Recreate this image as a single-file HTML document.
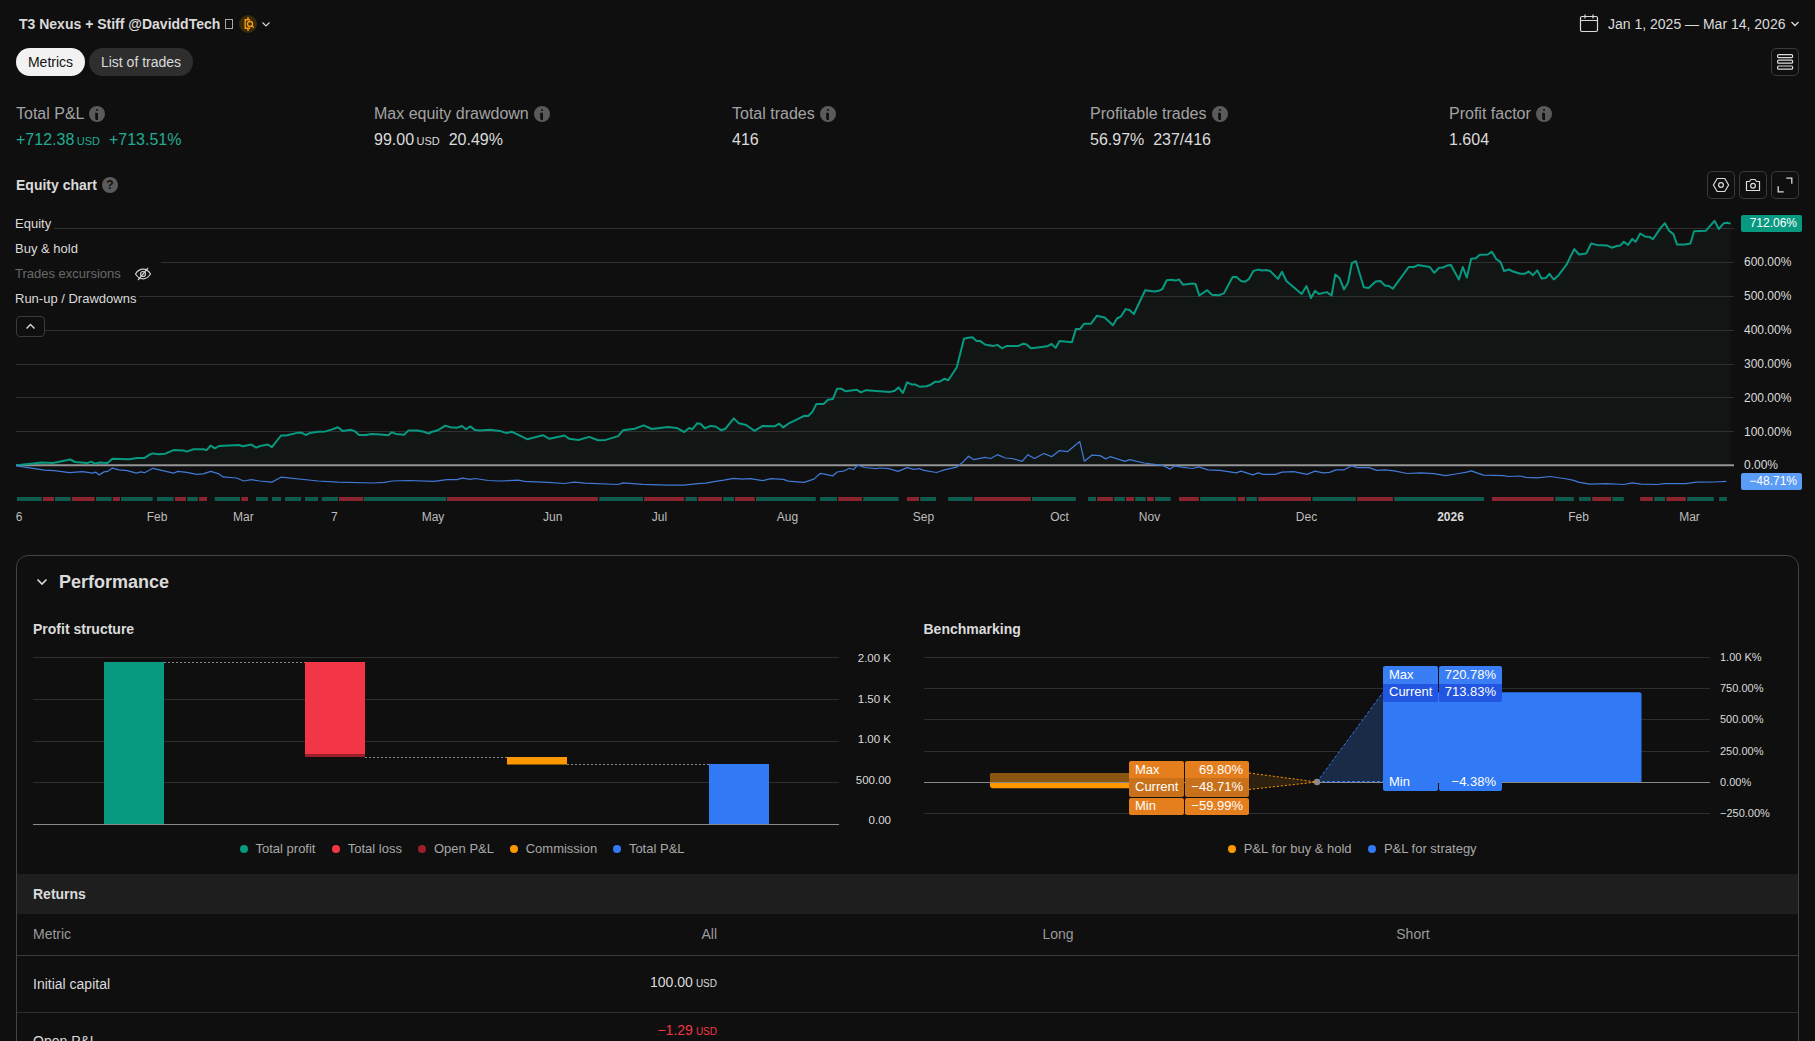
<!DOCTYPE html>
<html><head><meta charset="utf-8">
<style>
*{box-sizing:border-box;margin:0;padding:0}
html,body{width:1815px;height:1041px;overflow:hidden;background:#0f0f0f;font-family:"Liberation Sans",sans-serif;color:#dbdbdb}
.a{position:absolute;white-space:nowrap}
.title{left:19px;top:15px;font-size:14px;font-weight:bold;line-height:18px;color:#dbdbdb}
.pill{height:28px;top:48px;border-radius:14px;font-size:14px;line-height:28px;text-align:center}
.mlabel{top:104px;font-size:16px;line-height:20px;color:#a3a3a3}
.mval{top:130px;font-size:16px;line-height:20px;color:#dbdbdb}
.usd{font-size:11px;margin-left:2px}
.info{width:16px;height:16px;border-radius:50%;background:#5a5a5a;top:106px}
.info:after{content:"";position:absolute;left:7px;top:7px;width:2px;height:6px;background:#0f0f0f;border-top:1px solid #0f0f0f;box-shadow:-1px -0.5px 0 -0.2px #0f0f0f}
.info:before{content:"";position:absolute;left:7px;top:3px;width:2.2px;height:2.2px;background:#0f0f0f;border-radius:50%}
.btn{width:28px;height:28px;border:1px solid #3a3a3a;border-radius:5px}
.leg{font-size:13px;line-height:16px;color:#dbdbdb;background:#0f0f0f;padding:4px 0}
.yl{font-size:12px;line-height:14px;color:#dbdbdb;left:1744px}
.xl{font-size:12px;line-height:14px;color:#bdbdbd;top:510px;transform:translateX(-50%)}
.panel{left:16px;top:555px;width:1783px;height:520px;border:1px solid #434343;border-radius:12px}
.h2{font-size:14px;font-weight:bold;line-height:18px;color:#dbdbdb}
.psl{font-size:11.5px;line-height:14px;color:#dbdbdb;text-align:right;width:60px;left:831px}
.bl{font-size:11px;line-height:14px;color:#dbdbdb;left:1720px}
.lg{font-size:13px;line-height:16px;color:#a8a8a8}
.dot{display:inline-block;width:8px;height:8px;border-radius:50%;margin-right:8px;vertical-align:0px}
.tb{font-size:13px;line-height:17px;color:#fff}
.th{font-size:14px;line-height:18px;color:#9a9a9a}
.td{font-size:14px;line-height:18px;color:#dbdbdb}
</style></head><body>
<!-- HEADER -->
<div class="a title">T3 Nexus + Stiff @DaviddTech</div>
<div class="a" style="left:225px;top:19px;width:8.3px;height:10px;border:1.2px solid #a8a8a8"></div>
<div class="a" style="left:239px;top:15px;width:18px;height:18px;border-radius:50%;background:#3a2a0a"></div>
<svg class="a" style="left:239px;top:15px" width="18" height="18" viewBox="0 0 18 18"><g fill="none" stroke="#f39c12" stroke-width="1.4"><path d="M9 2v2.8M9 13.3v2.6"/><path d="M11.2 4.8H6.2V13.3H11.2"/><circle cx="11" cy="9" r="2.5"/><path d="M12.9 10.9l1.9 1.6"/></g></svg>
<svg class="a" style="left:261px;top:20px" width="10" height="8" viewBox="0 0 10 8"><path d="M1.5 2.5l3.5 3.5 3.5-3.5" fill="none" stroke="#dbdbdb" stroke-width="1.1"/></svg>

<svg class="a" style="left:1579px;top:13px" width="20" height="20" viewBox="0 0 20 20"><g fill="none" stroke="#dbdbdb" stroke-width="1.2"><rect x="1.5" y="3.5" width="17" height="15" rx="1.5"/><path d="M1.5 7.5h17M6 1.5v4M14 1.5v4"/></g></svg>
<div class="a" style="left:1608px;top:15px;font-size:14px;line-height:18px;color:#dbdbdb">Jan 1, 2025 — Mar 14, 2026</div>
<svg class="a" style="left:1789px;top:19px" width="12" height="10" viewBox="0 0 12 10"><path d="M2.5 3l3.5 3.5 3.5-3.5" fill="none" stroke="#dbdbdb" stroke-width="1.3"/></svg>

<div class="a pill" style="left:16px;width:69px;background:#f2f2f2;color:#131313">Metrics</div>
<div class="a pill" style="left:89px;width:104px;background:#2e2e2e;color:#dbdbdb">List of trades</div>
<div class="a btn" style="left:1771px;top:48px"></div>
<svg class="a" style="left:1771px;top:48px" width="28" height="28" viewBox="0 0 28 28"><g fill="none" stroke="#dbdbdb" stroke-width="1.2"><rect x="6.6" y="6.6" width="15" height="3" rx="1"/><rect x="6.6" y="12.2" width="15" height="3" rx="1"/><rect x="6.6" y="18" width="15" height="3.2" rx="1"/></g></svg>

<!-- METRICS -->
<div class="a mlabel" style="left:16px">Total P&amp;L</div><div class="a info" style="left:89px"></div>
<div class="a mval" style="left:16px;color:#22ab94">+712.38<span class="usd" style="margin-left:2.5px">USD</span>&nbsp;&nbsp;+713.51%</div>
<div class="a mlabel" style="left:374px">Max equity drawdown</div><div class="a info" style="left:534px"></div>
<div class="a mval" style="left:374px">99.00<span class="usd" style="margin-left:2.5px">USD</span>&nbsp;&nbsp;20.49%</div>
<div class="a mlabel" style="left:732px">Total trades</div><div class="a info" style="left:820px"></div>
<div class="a mval" style="left:732px">416</div>
<div class="a mlabel" style="left:1090px">Profitable trades</div><div class="a info" style="left:1212px"></div>
<div class="a mval" style="left:1090px">56.97%&nbsp;&nbsp;237/416</div>
<div class="a mlabel" style="left:1449px">Profit factor</div><div class="a info" style="left:1536px"></div>
<div class="a mval" style="left:1449px">1.604</div>

<!-- EQUITY CHART -->
<div class="a h2" style="left:16px;top:176px">Equity chart</div>
<div class="a" style="left:102px;top:177px;width:16px;height:16px;border-radius:50%;background:#5a5a5a;color:#0f0f0f;font-size:12px;font-weight:bold;line-height:17.5px;text-align:center">?</div>
<div class="a btn" style="left:1707px;top:171px"></div>
<div class="a btn" style="left:1739px;top:171px"></div>
<div class="a btn" style="left:1771px;top:171px"></div>
<svg class="a" style="left:1707px;top:171px" width="28" height="28" viewBox="0 0 28 28"><g fill="none" stroke="#dbdbdb" stroke-width="1.2"><path d="M10.2 7.5h7.6l3.8 6.5-3.8 6.5h-7.6l-3.8-6.5z"/><circle cx="14" cy="14" r="2.4"/></g></svg>
<svg class="a" style="left:1739px;top:171px" width="28" height="28" viewBox="0 0 28 28"><g fill="none" stroke="#dbdbdb" stroke-width="1.2"><path d="M7.5 10.5h3l1.5-2h4l1.5 2h3v9h-13z"/><circle cx="14" cy="14.8" r="2.4"/></g></svg>
<svg class="a" style="left:1771px;top:171px" width="28" height="28" viewBox="0 0 28 28"><g fill="none" stroke="#dbdbdb" stroke-width="1.3"><path d="M15.3 7.2H20.8V12.8M12.7 20.8H7.2V15.2"/></g></svg>
<svg class="a" style="left:0;top:0" width="1815" height="541" viewBox="0 0 1815 541">
<line x1="16" y1="228.5" x2="1734" y2="228.5" stroke="#2e2e2e" stroke-width="1"/>
<line x1="16" y1="262.5" x2="1734" y2="262.5" stroke="#2e2e2e" stroke-width="1"/>
<line x1="16" y1="296.5" x2="1734" y2="296.5" stroke="#2e2e2e" stroke-width="1"/>
<line x1="16" y1="330.5" x2="1734" y2="330.5" stroke="#2e2e2e" stroke-width="1"/>
<line x1="16" y1="364.5" x2="1734" y2="364.5" stroke="#2e2e2e" stroke-width="1"/>
<line x1="16" y1="397.5" x2="1734" y2="397.5" stroke="#2e2e2e" stroke-width="1"/>
<line x1="16" y1="431.5" x2="1734" y2="431.5" stroke="#2e2e2e" stroke-width="1"/>
<path d="M16.5 465.3 L33.0 463.6 L41.3 462.5 L52.9 463.1 L70.2 459.5 L75.2 462.0 L87.6 463.1 L90.9 461.7 L95.0 463.6 L99.2 462.5 L107.4 463.1 L112.4 458.7 L128.9 459.2 L137.2 457.9 L144.6 457.9 L150.4 454.2 L152.9 453.4 L158.7 454.2 L165.3 453.7 L173.6 450.1 L183.5 450.4 L186.8 451.6 L193.4 449.3 L203.3 449.3 L206.6 450.1 L210.7 445.5 L214.9 448.3 L219.0 446.0 L238.8 445.0 L243.0 446.3 L251.2 444.6 L256.2 447.6 L260.3 446.0 L267.8 444.6 L271.9 447.1 L281.0 435.5 L286.0 435.5 L298.3 432.6 L302.4 433.1 L305.7 435.0 L309.8 433.1 L318.1 431.7 L325.5 431.4 L332.1 429.4 L337.9 427.3 L342.6 430.9 L350.8 429.8 L354.5 431.1 L359.1 435.0 L366.0 435.0 L371.0 433.9 L380.9 434.4 L388.3 435.2 L391.7 432.2 L395.8 433.9 L404.0 434.7 L408.2 430.6 L417.3 430.6 L423.9 431.7 L428.8 433.6 L432.1 431.7 L437.1 430.6 L445.4 425.6 L450.3 427.3 L456.9 427.8 L461.9 426.0 L466.0 429.3 L470.2 426.4 L475.1 430.1 L480.1 430.6 L490.0 429.8 L499.9 430.9 L506.5 433.1 L511.5 431.7 L516.4 433.9 L527.2 439.2 L542.9 435.2 L549.5 438.8 L564.4 435.5 L569.3 438.8 L578.4 440.0 L589.1 436.9 L598.2 440.2 L605.7 439.9 L618.1 436.1 L623.0 430.3 L634.6 428.7 L643.7 425.4 L651.9 429.0 L667.6 427.0 L676.7 427.9 L684.2 432.0 L689.1 427.9 L692.4 429.2 L697.4 423.2 L700.7 424.0 L704.8 428.2 L710.6 425.9 L715.6 426.5 L721.4 430.3 L725.5 428.7 L733.8 418.4 L738.7 423.2 L746.2 425.0 L754.4 430.8 L762.7 425.9 L775.1 426.2 L779.2 423.7 L783.3 427.4 L788.3 423.7 L798.2 418.8 L804.0 415.8 L808.1 416.0 L812.3 412.1 L816.4 403.9 L823.8 403.9 L828.0 399.8 L832.9 398.9 L837.1 388.7 L841.2 388.7 L845.3 391.2 L856.9 389.8 L861.0 392.3 L866.0 390.2 L880.0 391.2 L890.2 391.9 L894.7 390.8 L898.5 387.4 L903.0 393.0 L907.1 382.4 L911.6 384.4 L915.0 384.4 L919.5 386.7 L926.3 386.3 L930.8 384.7 L935.3 381.7 L939.8 381.7 L944.3 378.8 L948.2 380.2 L956.7 367.5 L964.0 338.8 L968.0 337.7 L972.6 337.3 L976.6 341.1 L980.5 341.1 L985.0 344.5 L992.9 346.1 L997.4 344.9 L1001.9 348.3 L1006.4 346.1 L1017.7 346.1 L1023.3 343.8 L1026.7 344.5 L1030.8 348.3 L1038.0 347.4 L1047.0 346.3 L1051.6 344.0 L1055.6 347.9 L1059.5 341.1 L1071.9 342.2 L1075.9 329.1 L1079.8 329.1 L1084.3 323.7 L1091.1 323.7 L1096.7 315.8 L1104.6 317.4 L1113.0 325.3 L1117.0 318.5 L1121.1 316.3 L1125.6 309.1 L1129.4 310.0 L1133.9 314.0 L1145.2 290.3 L1154.3 291.4 L1158.8 290.8 L1162.2 289.2 L1166.7 280.2 L1171.2 279.7 L1175.7 280.6 L1179.0 279.4 L1182.9 284.7 L1192.2 283.6 L1195.6 284.1 L1199.3 295.5 L1207.2 290.2 L1212.0 294.7 L1218.6 295.2 L1223.9 293.4 L1232.6 277.0 L1236.5 277.0 L1241.0 281.0 L1245.0 281.8 L1248.9 279.1 L1253.4 270.9 L1258.2 269.6 L1262.1 270.4 L1266.1 270.1 L1270.1 270.9 L1278.0 278.9 L1281.9 271.7 L1286.4 281.0 L1301.7 293.9 L1306.5 286.0 L1311.0 298.1 L1315.0 290.7 L1318.9 293.9 L1326.8 292.1 L1331.6 295.5 L1335.3 274.4 L1339.5 278.1 L1344.0 289.4 L1348.0 282.8 L1351.9 263.0 L1355.9 261.2 L1363.8 287.3 L1368.6 288.1 L1375.7 281.5 L1380.4 281.0 L1384.9 285.5 L1388.9 286.0 L1392.9 288.6 L1408.7 267.0 L1414.0 267.0 L1417.9 265.1 L1429.8 267.0 L1434.3 272.8 L1439.1 267.8 L1443.0 267.5 L1447.0 265.6 L1450.9 264.9 L1458.9 279.4 L1462.8 267.0 L1466.8 277.5 L1471.2 258.8 L1475.8 258.2 L1479.7 254.8 L1487.7 254.5 L1491.9 251.7 L1496.2 259.0 L1500.4 261.9 L1504.1 271.0 L1508.9 269.5 L1513.2 271.5 L1520.3 273.8 L1524.5 273.8 L1528.8 271.5 L1533.0 275.2 L1537.3 270.4 L1541.6 278.6 L1545.8 278.0 L1549.5 273.8 L1553.7 279.5 L1558.6 275.2 L1566.5 264.7 L1574.2 249.1 L1579.0 254.5 L1586.3 253.4 L1591.2 243.5 L1596.8 244.9 L1606.8 245.4 L1611.9 247.7 L1616.7 246.0 L1620.4 245.4 L1623.8 241.8 L1628.0 244.9 L1632.3 238.9 L1635.7 241.8 L1640.2 233.5 L1645.0 236.4 L1649.3 236.9 L1653.0 239.2 L1660.6 227.9 L1664.9 223.3 L1669.1 230.7 L1673.4 234.1 L1677.1 244.6 L1684.7 244.6 L1690.4 243.5 L1694.1 231.3 L1706.0 230.7 L1714.5 220.8 L1718.8 229.0 L1723.6 223.3 L1727.3 222.8 L1730.7 223.6 L1730.7 465.3 L16.5 465.3 Z" fill="#111615"/>
<line x1="16" y1="228.5" x2="1734" y2="228.5" stroke="#2f3131" stroke-width="1"/>
<line x1="16" y1="262.5" x2="1734" y2="262.5" stroke="#2f3131" stroke-width="1"/>
<line x1="16" y1="296.5" x2="1734" y2="296.5" stroke="#2f3131" stroke-width="1"/>
<line x1="16" y1="330.5" x2="1734" y2="330.5" stroke="#2f3131" stroke-width="1"/>
<line x1="16" y1="364.5" x2="1734" y2="364.5" stroke="#2f3131" stroke-width="1"/>
<line x1="16" y1="397.5" x2="1734" y2="397.5" stroke="#2f3131" stroke-width="1"/>
<line x1="16" y1="431.5" x2="1734" y2="431.5" stroke="#2f3131" stroke-width="1"/>
<line x1="16" y1="465.3" x2="1734" y2="465.3" stroke="#959595" stroke-width="2"/>
<path d="M16.5 465.3 L33.0 463.6 L41.3 462.5 L52.9 463.1 L70.2 459.5 L75.2 462.0 L87.6 463.1 L90.9 461.7 L95.0 463.6 L99.2 462.5 L107.4 463.1 L112.4 458.7 L128.9 459.2 L137.2 457.9 L144.6 457.9 L150.4 454.2 L152.9 453.4 L158.7 454.2 L165.3 453.7 L173.6 450.1 L183.5 450.4 L186.8 451.6 L193.4 449.3 L203.3 449.3 L206.6 450.1 L210.7 445.5 L214.9 448.3 L219.0 446.0 L238.8 445.0 L243.0 446.3 L251.2 444.6 L256.2 447.6 L260.3 446.0 L267.8 444.6 L271.9 447.1 L281.0 435.5 L286.0 435.5 L298.3 432.6 L302.4 433.1 L305.7 435.0 L309.8 433.1 L318.1 431.7 L325.5 431.4 L332.1 429.4 L337.9 427.3 L342.6 430.9 L350.8 429.8 L354.5 431.1 L359.1 435.0 L366.0 435.0 L371.0 433.9 L380.9 434.4 L388.3 435.2 L391.7 432.2 L395.8 433.9 L404.0 434.7 L408.2 430.6 L417.3 430.6 L423.9 431.7 L428.8 433.6 L432.1 431.7 L437.1 430.6 L445.4 425.6 L450.3 427.3 L456.9 427.8 L461.9 426.0 L466.0 429.3 L470.2 426.4 L475.1 430.1 L480.1 430.6 L490.0 429.8 L499.9 430.9 L506.5 433.1 L511.5 431.7 L516.4 433.9 L527.2 439.2 L542.9 435.2 L549.5 438.8 L564.4 435.5 L569.3 438.8 L578.4 440.0 L589.1 436.9 L598.2 440.2 L605.7 439.9 L618.1 436.1 L623.0 430.3 L634.6 428.7 L643.7 425.4 L651.9 429.0 L667.6 427.0 L676.7 427.9 L684.2 432.0 L689.1 427.9 L692.4 429.2 L697.4 423.2 L700.7 424.0 L704.8 428.2 L710.6 425.9 L715.6 426.5 L721.4 430.3 L725.5 428.7 L733.8 418.4 L738.7 423.2 L746.2 425.0 L754.4 430.8 L762.7 425.9 L775.1 426.2 L779.2 423.7 L783.3 427.4 L788.3 423.7 L798.2 418.8 L804.0 415.8 L808.1 416.0 L812.3 412.1 L816.4 403.9 L823.8 403.9 L828.0 399.8 L832.9 398.9 L837.1 388.7 L841.2 388.7 L845.3 391.2 L856.9 389.8 L861.0 392.3 L866.0 390.2 L880.0 391.2 L890.2 391.9 L894.7 390.8 L898.5 387.4 L903.0 393.0 L907.1 382.4 L911.6 384.4 L915.0 384.4 L919.5 386.7 L926.3 386.3 L930.8 384.7 L935.3 381.7 L939.8 381.7 L944.3 378.8 L948.2 380.2 L956.7 367.5 L964.0 338.8 L968.0 337.7 L972.6 337.3 L976.6 341.1 L980.5 341.1 L985.0 344.5 L992.9 346.1 L997.4 344.9 L1001.9 348.3 L1006.4 346.1 L1017.7 346.1 L1023.3 343.8 L1026.7 344.5 L1030.8 348.3 L1038.0 347.4 L1047.0 346.3 L1051.6 344.0 L1055.6 347.9 L1059.5 341.1 L1071.9 342.2 L1075.9 329.1 L1079.8 329.1 L1084.3 323.7 L1091.1 323.7 L1096.7 315.8 L1104.6 317.4 L1113.0 325.3 L1117.0 318.5 L1121.1 316.3 L1125.6 309.1 L1129.4 310.0 L1133.9 314.0 L1145.2 290.3 L1154.3 291.4 L1158.8 290.8 L1162.2 289.2 L1166.7 280.2 L1171.2 279.7 L1175.7 280.6 L1179.0 279.4 L1182.9 284.7 L1192.2 283.6 L1195.6 284.1 L1199.3 295.5 L1207.2 290.2 L1212.0 294.7 L1218.6 295.2 L1223.9 293.4 L1232.6 277.0 L1236.5 277.0 L1241.0 281.0 L1245.0 281.8 L1248.9 279.1 L1253.4 270.9 L1258.2 269.6 L1262.1 270.4 L1266.1 270.1 L1270.1 270.9 L1278.0 278.9 L1281.9 271.7 L1286.4 281.0 L1301.7 293.9 L1306.5 286.0 L1311.0 298.1 L1315.0 290.7 L1318.9 293.9 L1326.8 292.1 L1331.6 295.5 L1335.3 274.4 L1339.5 278.1 L1344.0 289.4 L1348.0 282.8 L1351.9 263.0 L1355.9 261.2 L1363.8 287.3 L1368.6 288.1 L1375.7 281.5 L1380.4 281.0 L1384.9 285.5 L1388.9 286.0 L1392.9 288.6 L1408.7 267.0 L1414.0 267.0 L1417.9 265.1 L1429.8 267.0 L1434.3 272.8 L1439.1 267.8 L1443.0 267.5 L1447.0 265.6 L1450.9 264.9 L1458.9 279.4 L1462.8 267.0 L1466.8 277.5 L1471.2 258.8 L1475.8 258.2 L1479.7 254.8 L1487.7 254.5 L1491.9 251.7 L1496.2 259.0 L1500.4 261.9 L1504.1 271.0 L1508.9 269.5 L1513.2 271.5 L1520.3 273.8 L1524.5 273.8 L1528.8 271.5 L1533.0 275.2 L1537.3 270.4 L1541.6 278.6 L1545.8 278.0 L1549.5 273.8 L1553.7 279.5 L1558.6 275.2 L1566.5 264.7 L1574.2 249.1 L1579.0 254.5 L1586.3 253.4 L1591.2 243.5 L1596.8 244.9 L1606.8 245.4 L1611.9 247.7 L1616.7 246.0 L1620.4 245.4 L1623.8 241.8 L1628.0 244.9 L1632.3 238.9 L1635.7 241.8 L1640.2 233.5 L1645.0 236.4 L1649.3 236.9 L1653.0 239.2 L1660.6 227.9 L1664.9 223.3 L1669.1 230.7 L1673.4 234.1 L1677.1 244.6 L1684.7 244.6 L1690.4 243.5 L1694.1 231.3 L1706.0 230.7 L1714.5 220.8 L1718.8 229.0 L1723.6 223.3 L1727.3 222.8 L1730.7 223.6" fill="none" stroke="#089981" stroke-width="2" stroke-linejoin="round"/>
<path d="M16.5 465.8 L44.6 470.2 L54.5 470.7 L69.4 472.7 L82.6 471.6 L92.6 473.2 L95.9 472.2 L99.2 474.9 L104.1 471.9 L107.4 471.4 L112.4 468.1 L119.0 469.8 L127.3 470.7 L136.4 473.2 L140.5 471.9 L144.6 472.7 L152.9 468.3 L173.6 473.2 L177.7 471.4 L186.8 472.4 L196.7 474.4 L203.3 473.9 L210.7 471.4 L218.2 473.6 L223.1 476.9 L236.4 478.0 L243.8 481.0 L251.2 479.7 L259.5 481.0 L271.9 482.1 L281.0 477.2 L318.1 481.0 L337.9 482.1 L372.6 483.0 L384.2 482.3 L392.5 481.0 L409.0 480.5 L433.8 481.3 L447.0 479.7 L456.9 479.7 L462.7 478.2 L470.2 479.3 L475.1 478.5 L488.3 480.5 L499.9 481.0 L518.1 480.2 L524.7 481.3 L547.9 482.3 L564.4 483.5 L574.3 482.1 L585.0 483.2 L618.1 484.5 L623.0 482.9 L642.9 484.4 L667.6 485.2 L684.2 485.2 L697.4 483.6 L705.7 483.2 L713.9 481.6 L723.8 480.2 L733.8 478.3 L742.0 479.1 L750.3 478.6 L762.7 480.7 L771.0 478.6 L783.3 479.4 L788.3 481.1 L804.0 482.4 L813.9 479.1 L820.5 473.3 L833.0 475.8 L837.1 472.0 L844.5 470.8 L849.5 468.3 L853.6 469.5 L857.7 465.0 L864.3 467.5 L875.9 468.7 L880.0 468.0 L889.0 468.6 L898.0 471.4 L907.1 467.7 L913.9 469.3 L919.5 468.6 L924.0 470.4 L936.4 472.5 L944.3 469.8 L956.7 467.1 L962.4 462.6 L968.5 456.2 L973.7 459.6 L985.0 457.4 L990.6 458.5 L997.4 454.7 L1005.3 458.0 L1012.1 458.5 L1022.2 461.4 L1027.9 454.7 L1034.6 458.5 L1043.7 453.5 L1051.6 456.7 L1059.5 450.6 L1067.4 451.7 L1079.8 441.6 L1084.3 461.2 L1092.2 455.1 L1100.1 455.6 L1105.7 458.9 L1110.2 456.7 L1124.9 461.4 L1129.4 459.6 L1144.1 463.0 L1162.2 465.3 L1170.1 469.1 L1175.0 465.8 L1181.6 467.1 L1192.2 468.5 L1198.8 466.9 L1208.0 469.8 L1219.9 470.3 L1236.3 472.9 L1241.0 471.1 L1252.9 474.8 L1258.2 472.9 L1263.5 474.3 L1275.3 474.3 L1281.9 472.1 L1293.8 471.6 L1307.0 474.3 L1315.0 471.1 L1322.9 472.9 L1329.5 472.4 L1336.1 469.8 L1344.0 469.8 L1351.9 465.8 L1357.2 467.7 L1369.1 467.7 L1377.0 470.3 L1384.9 469.8 L1394.2 470.8 L1407.4 473.5 L1420.6 472.9 L1433.8 473.7 L1445.7 475.6 L1458.9 473.5 L1466.8 472.1 L1471.2 470.8 L1483.4 475.1 L1503.3 475.7 L1508.9 476.5 L1520.3 476.0 L1526.0 477.4 L1537.3 477.9 L1550.1 476.5 L1564.2 478.5 L1572.7 480.2 L1578.4 482.2 L1589.8 484.2 L1606.8 483.6 L1623.8 484.5 L1632.3 482.8 L1640.8 484.2 L1657.8 484.5 L1663.5 483.6 L1686.2 483.6 L1696.1 482.2 L1714.5 482.0 L1726.4 481.3" fill="none" stroke="#4179d6" stroke-width="1.25" stroke-linejoin="round"/>
<rect x="16.9" y="497" width="24.8" height="4" fill="#0d5c4d"/>
<rect x="42.9" y="497" width="11.1" height="4" fill="#8a2530"/>
<rect x="55.0" y="497" width="15.7" height="4" fill="#0d5c4d"/>
<rect x="71.9" y="497" width="22.8" height="4" fill="#8a2530"/>
<rect x="96.0" y="497" width="15.6" height="4" fill="#0d5c4d"/>
<rect x="112.8" y="497" width="7.2" height="4" fill="#8a2530"/>
<rect x="121.0" y="497" width="31.7" height="4" fill="#0d5c4d"/>
<rect x="157.0" y="497" width="16.6" height="4" fill="#0d5c4d"/>
<rect x="175.0" y="497" width="11.0" height="4" fill="#8a2530"/>
<rect x="187.2" y="497" width="10.7" height="4" fill="#0d5c4d"/>
<rect x="199.1" y="497" width="7.9" height="4" fill="#8a2530"/>
<rect x="214.7" y="497" width="25.3" height="4" fill="#0d5c4d"/>
<rect x="241.3" y="497" width="6.7" height="4" fill="#8a2530"/>
<rect x="255.9" y="497" width="11.9" height="4" fill="#0d5c4d"/>
<rect x="272.0" y="497" width="9.0" height="4" fill="#0d5c4d"/>
<rect x="285.1" y="497" width="15.9" height="4" fill="#0d5c4d"/>
<rect x="305.0" y="497" width="13.1" height="4" fill="#0d5c4d"/>
<rect x="321.8" y="497" width="16.2" height="4" fill="#0d5c4d"/>
<rect x="339.0" y="497" width="24.3" height="4" fill="#8a2530"/>
<rect x="364.0" y="497" width="82.2" height="4" fill="#0d5c4d"/>
<rect x="447.0" y="497" width="150.9" height="4" fill="#8a2530"/>
<rect x="599.2" y="497" width="43.8" height="4" fill="#0d5c4d"/>
<rect x="644.1" y="497" width="40.1" height="4" fill="#8a2530"/>
<rect x="685.4" y="497" width="11.6" height="4" fill="#0d5c4d"/>
<rect x="698.1" y="497" width="23.9" height="4" fill="#8a2530"/>
<rect x="723.2" y="497" width="10.8" height="4" fill="#0d5c4d"/>
<rect x="735.0" y="497" width="19.8" height="4" fill="#8a2530"/>
<rect x="756.0" y="497" width="59.8" height="4" fill="#0d5c4d"/>
<rect x="820.0" y="497" width="17.1" height="4" fill="#0d5c4d"/>
<rect x="838.1" y="497" width="23.9" height="4" fill="#8a2530"/>
<rect x="863.2" y="497" width="35.4" height="4" fill="#0d5c4d"/>
<rect x="906.9" y="497" width="12.1" height="4" fill="#8a2530"/>
<rect x="920.2" y="497" width="15.8" height="4" fill="#0d5c4d"/>
<rect x="948.1" y="497" width="24.5" height="4" fill="#0d5c4d"/>
<rect x="974.1" y="497" width="56.8" height="4" fill="#8a2530"/>
<rect x="1032.0" y="497" width="43.8" height="4" fill="#0d5c4d"/>
<rect x="1088.1" y="497" width="7.9" height="4" fill="#0d5c4d"/>
<rect x="1097.2" y="497" width="15.8" height="4" fill="#8a2530"/>
<rect x="1114.1" y="497" width="10.8" height="4" fill="#0d5c4d"/>
<rect x="1126.0" y="497" width="8.0" height="4" fill="#8a2530"/>
<rect x="1135.1" y="497" width="10.6" height="4" fill="#0d5c4d"/>
<rect x="1147.0" y="497" width="6.8" height="4" fill="#8a2530"/>
<rect x="1155.0" y="497" width="15.7" height="4" fill="#0d5c4d"/>
<rect x="1179.0" y="497" width="19.8" height="4" fill="#8a2530"/>
<rect x="1200.1" y="497" width="36.4" height="4" fill="#0d5c4d"/>
<rect x="1237.8" y="497" width="7.2" height="4" fill="#8a2530"/>
<rect x="1246.3" y="497" width="10.6" height="4" fill="#0d5c4d"/>
<rect x="1258.2" y="497" width="52.8" height="4" fill="#8a2530"/>
<rect x="1312.3" y="497" width="43.6" height="4" fill="#0d5c4d"/>
<rect x="1357.2" y="497" width="35.7" height="4" fill="#8a2530"/>
<rect x="1394.2" y="497" width="89.8" height="4" fill="#0d5c4d"/>
<rect x="1491.9" y="497" width="61.9" height="4" fill="#8a2530"/>
<rect x="1555.2" y="497" width="18.6" height="4" fill="#0d5c4d"/>
<rect x="1579.0" y="497" width="11.8" height="4" fill="#0d5c4d"/>
<rect x="1592.2" y="497" width="18.9" height="4" fill="#8a2530"/>
<rect x="1612.3" y="497" width="11.5" height="4" fill="#0d5c4d"/>
<rect x="1640.1" y="497" width="12.7" height="4" fill="#8a2530"/>
<rect x="1654.2" y="497" width="10.8" height="4" fill="#0d5c4d"/>
<rect x="1666.3" y="497" width="19.5" height="4" fill="#8a2530"/>
<rect x="1687.2" y="497" width="26.7" height="4" fill="#0d5c4d"/>
<rect x="1719.1" y="497" width="7.8" height="4" fill="#0d5c4d"/>
</svg>
<div class="a leg" style="left:14px;top:212px;padding:4px 3px 4px 1px">Equity</div>
<div class="a leg" style="left:14px;top:237px;padding:4px 3px 4px 1px">Buy &amp; hold</div>
<div class="a leg" style="left:14px;top:262px;padding:4px 40px 4px 1px;color:#6a6a6a">Trades excursions</div>
<svg class="a" style="left:134px;top:265px" width="18" height="18" viewBox="0 0 18 18"><g fill="none" stroke="#cfcfcf" stroke-width="1.2"><path d="M1.5 9c2-3.2 4.5-4.8 7.5-4.8s5.5 1.6 7.5 4.8c-2 3.2-4.5 4.8-7.5 4.8S3.5 12.2 1.5 9z"/><circle cx="9" cy="9" r="2.5"/><path d="M14 3L4 15"/></g></svg>
<div class="a leg" style="left:14px;top:287px;padding:4px 3px 4px 1px">Run-up / Drawdowns</div>
<div class="a" style="left:16px;top:316px;width:29px;height:21px;border:1px solid #3a3a3a;border-radius:4px;background:#0f0f0f"></div>
<svg class="a" style="left:16px;top:316px" width="29" height="21" viewBox="0 0 29 21"><path d="M10.5 12.5l4-4 4 4" fill="none" stroke="#dbdbdb" stroke-width="1.4"/></svg>
<div class="a yl" style="top:221.3px">700.00%</div>
<div class="a yl" style="top:255.2px">600.00%</div>
<div class="a yl" style="top:289.1px">500.00%</div>
<div class="a yl" style="top:323.0px">400.00%</div>
<div class="a yl" style="top:356.9px">300.00%</div>
<div class="a yl" style="top:390.7px">200.00%</div>
<div class="a yl" style="top:424.5px">100.00%</div>
<div class="a yl" style="top:458.3px">0.00%</div>
<div class="a" style="left:1741px;top:215px;width:61px;height:17px;background:#089981;border-radius:2px;color:#fff;font-size:12px;line-height:17px;text-align:right;padding-right:5px">712.06%</div>
<div class="a" style="left:1741px;top:473px;width:61px;height:17px;background:#5b9cf6;border-radius:2px;color:#fff;font-size:12px;line-height:17px;text-align:right;padding-right:5px">−48.71%</div>
<div class="a xl" style="left:19px;">6</div>
<div class="a xl" style="left:157px;">Feb</div>
<div class="a xl" style="left:243.4px;">Mar</div>
<div class="a xl" style="left:334.4px;">7</div>
<div class="a xl" style="left:433px;">May</div>
<div class="a xl" style="left:552.7px;">Jun</div>
<div class="a xl" style="left:659.5px;">Jul</div>
<div class="a xl" style="left:787.4px;">Aug</div>
<div class="a xl" style="left:923.5px;">Sep</div>
<div class="a xl" style="left:1059.5px;">Oct</div>
<div class="a xl" style="left:1149.5px;">Nov</div>
<div class="a xl" style="left:1306.5px;">Dec</div>
<div class="a xl" style="left:1450.5px;font-weight:bold;color:#dbdbdb;">2026</div>
<div class="a xl" style="left:1578.5px;">Feb</div>
<div class="a xl" style="left:1689.5px;">Mar</div>

<!-- PERFORMANCE -->
<div class="a panel"></div>
<svg class="a" style="left:35px;top:577px" width="14" height="10" viewBox="0 0 14 10"><path d="M2.5 2.5l4.5 4.5 4.5-4.5" fill="none" stroke="#dbdbdb" stroke-width="1.6"/></svg>
<div class="a" style="left:59px;top:571px;font-size:18px;font-weight:bold;line-height:22px;color:#dbdbdb">Performance</div>
<div class="a h2" style="left:33px;top:620px">Profit structure</div>
<div class="a h2" style="left:923.5px;top:620px">Benchmarking</div>
<svg class="a" style="left:0;top:0" width="1815" height="1041" viewBox="0 0 1815 1041">
<line x1="33" y1="657.5" x2="839" y2="657.5" stroke="#2e2e2e"/>
<line x1="33" y1="699.5" x2="839" y2="699.5" stroke="#2e2e2e"/>
<line x1="33" y1="741.5" x2="839" y2="741.5" stroke="#2e2e2e"/>
<line x1="33" y1="782.5" x2="839" y2="782.5" stroke="#2e2e2e"/>
<line x1="33" y1="824.5" x2="839" y2="824.5" stroke="#8a8a8a"/>
<rect x="104" y="662" width="60" height="162" fill="#089981"/>
<rect x="305" y="662" width="60" height="95" fill="#f23645"/>
<rect x="305" y="754" width="60" height="3" fill="#9c1f2a"/>
<rect x="507" y="757" width="60" height="7.5" fill="#ff9800"/>
<rect x="709" y="764" width="60" height="60" fill="#3179f5"/>
<path d="M164 662.5H305M365 757.5H507M567 764.5H709" stroke="#8a8a8a" stroke-dasharray="2 2"/>
<line x1="924" y1="657.5" x2="1710" y2="657.5" stroke="#2e2e2e"/>
<line x1="924" y1="688.5" x2="1710" y2="688.5" stroke="#2e2e2e"/>
<line x1="924" y1="719.5" x2="1710" y2="719.5" stroke="#2e2e2e"/>
<line x1="924" y1="751.5" x2="1710" y2="751.5" stroke="#2e2e2e"/>
<line x1="924" y1="813.5" x2="1710" y2="813.5" stroke="#2e2e2e"/>
<rect x="990" y="773" width="145" height="15.3" rx="3" fill="#ff9800"/>
<rect x="990" y="773" width="145" height="9.5" rx="3" fill="#8a5510"/>
<rect x="990" y="777" width="145" height="5.5" fill="#8a5510"/>
<line x1="924" y1="782.5" x2="1710" y2="782.5" stroke="#8a8a8a"/>
<path d="M1249 773L1317 782L1249 789.5Z" fill="#2e2110"/>
<path d="M1249 773L1317 782M1249 789.5L1317 782" stroke="#ff9800" stroke-width="1" stroke-dasharray="2 2"/>
<path d="M1317 782L1383 692.3L1383 782Z" fill="#1a2b48"/>
<path d="M1317 782L1383 692.3M1317 781.5H1383" stroke="#3179f5" stroke-width="1" stroke-dasharray="3 2"/>
<path d="M1383 782V692.3H1639.5a2 2 0 0 1 2 2V782Z" fill="#3179f5"/>
<circle cx="1317" cy="782" r="3.2" fill="#8a8a8a"/>
</svg>
<div class="a psl" style="top:651.4px">2.00 K</div>
<div class="a psl" style="top:692.2px">1.50 K</div>
<div class="a psl" style="top:731.9px">1.00 K</div>
<div class="a psl" style="top:773.0px">500.00</div>
<div class="a psl" style="top:813.0px">0.00</div>
<div class="a bl" style="top:649.8px">1.00 K%</div>
<div class="a bl" style="top:681.3px">750.00%</div>
<div class="a bl" style="top:712.3px">500.00%</div>
<div class="a bl" style="top:744.0px">250.00%</div>
<div class="a bl" style="top:774.8px">0.00%</div>
<div class="a bl" style="top:806.0px">−250.00%</div>
<div class="a" style="left:1129px;top:761px;width:55px;height:17px;background:#e57e1d;border-radius:2px 2px 0 0"></div>
<div class="a" style="left:1185.2px;top:761px;width:63.8px;height:17px;background:#e57e1d;border-radius:2px 2px 0 0"></div>
<div class="a tb" style="left:1135px;top:760.5px">Max</div>
<div class="a tb" style="left:1185px;width:58px;text-align:right;top:760.5px">69.80%</div>
<div class="a" style="left:1129px;top:778px;width:55px;height:19px;background:#c8711a;border-radius:0 0 2px 2px"></div>
<div class="a" style="left:1185.2px;top:778px;width:63.8px;height:19px;background:#c8711a;border-radius:0 0 2px 2px"></div>
<div class="a tb" style="left:1135px;top:777.5px">Current</div>
<div class="a tb" style="left:1185px;width:58px;text-align:right;top:777.5px">−48.71%</div>
<div class="a" style="left:1129px;top:797.8px;width:55px;height:16.800000000000068px;background:#e57e1d;border-radius:2px"></div>
<div class="a" style="left:1185.2px;top:797.8px;width:63.8px;height:16.800000000000068px;background:#e57e1d;border-radius:2px"></div>
<div class="a tb" style="left:1135px;top:797.2px">Min</div>
<div class="a tb" style="left:1185px;width:58px;text-align:right;top:797.2px">−59.99%</div>
<div class="a" style="left:1383px;top:666.3px;width:55px;height:17.90000000000009px;background:#3a7ef5;border-radius:2px 2px 0 0"></div>
<div class="a" style="left:1439.2px;top:666.3px;width:62.8px;height:17.90000000000009px;background:#3a7ef5;border-radius:2px 2px 0 0"></div>
<div class="a tb" style="left:1389px;top:666.2px">Max</div>
<div class="a tb" style="left:1439px;width:57px;text-align:right;top:666.2px">720.78%</div>
<div class="a" style="left:1383px;top:684.2px;width:55px;height:17.399999999999977px;background:#2255e0;border-radius:0 0 2px 2px"></div>
<div class="a" style="left:1439.2px;top:684.2px;width:62.8px;height:17.399999999999977px;background:#2255e0;border-radius:0 0 2px 2px"></div>
<div class="a tb" style="left:1389px;top:682.9px">Current</div>
<div class="a tb" style="left:1439px;width:57px;text-align:right;top:682.9px">713.83%</div>
<div class="a" style="left:1383px;top:773.4px;width:55px;height:17.5px;background:#3179f5;border-radius:2px"></div>
<div class="a" style="left:1439.2px;top:773.4px;width:62.8px;height:17.5px;background:#3179f5;border-radius:2px"></div>
<div class="a tb" style="left:1389px;top:773.1px">Min</div>
<div class="a tb" style="left:1439px;width:57px;text-align:right;top:773.1px">−4.38%</div>
<div class="a" style="left:239.5px;top:844.5px;width:8px;height:8px;border-radius:50%;background:#089981"></div>
<div class="a lg" style="left:255.5px;top:840.5px">Total profit</div>
<div class="a" style="left:331.7px;top:844.5px;width:8px;height:8px;border-radius:50%;background:#f23645"></div>
<div class="a lg" style="left:347.7px;top:840.5px">Total loss</div>
<div class="a" style="left:418px;top:844.5px;width:8px;height:8px;border-radius:50%;background:#9c1f2a"></div>
<div class="a lg" style="left:434px;top:840.5px">Open P&amp;L</div>
<div class="a" style="left:509.70000000000005px;top:844.5px;width:8px;height:8px;border-radius:50%;background:#ff9800"></div>
<div class="a lg" style="left:525.7px;top:840.5px">Commission</div>
<div class="a" style="left:612.9px;top:844.5px;width:8px;height:8px;border-radius:50%;background:#3179f5"></div>
<div class="a lg" style="left:628.9px;top:840.5px">Total P&amp;L</div>
<div class="a" style="left:1227.7px;top:844.5px;width:8px;height:8px;border-radius:50%;background:#ff9800"></div>
<div class="a lg" style="left:1243.7px;top:840.5px">P&amp;L for buy &amp; hold</div>
<div class="a" style="left:1367.9px;top:844.5px;width:8px;height:8px;border-radius:50%;background:#3179f5"></div>
<div class="a lg" style="left:1383.9px;top:840.5px">P&amp;L for strategy</div>
<div class="a" style="left:17px;top:873.5px;width:1781px;height:40px;background:#1e1e1e"></div>
<div class="a h2" style="left:33px;top:885px">Returns</div>
<div class="a th" style="left:33px;top:925px">Metric</div>
<div class="a th" style="left:617px;width:100px;text-align:right;top:925px">All</div>
<div class="a th" style="left:1008px;width:100px;text-align:center;top:925px">Long</div>
<div class="a th" style="left:1363px;width:100px;text-align:center;top:925px">Short</div>
<div class="a" style="left:17px;top:954.5px;width:1781px;height:1px;background:#3b3b3b"></div>
<div class="a td" style="left:33px;top:975px">Initial capital</div>
<div class="a td" style="left:517px;width:200px;text-align:right;top:973px">100.00<span class="usd" style="font-size:10px;margin-left:3px">USD</span></div>
<div class="a" style="left:17px;top:1012px;width:1781px;height:1px;background:#2e2e2e"></div>
<div class="a td" style="left:33px;top:1032px">Open P&amp;L</div>
<div class="a td" style="left:517px;width:200px;text-align:right;top:1021px;color:#f23645">−1.29<span class="usd" style="font-size:10px;margin-left:3px">USD</span></div>
</body></html>
